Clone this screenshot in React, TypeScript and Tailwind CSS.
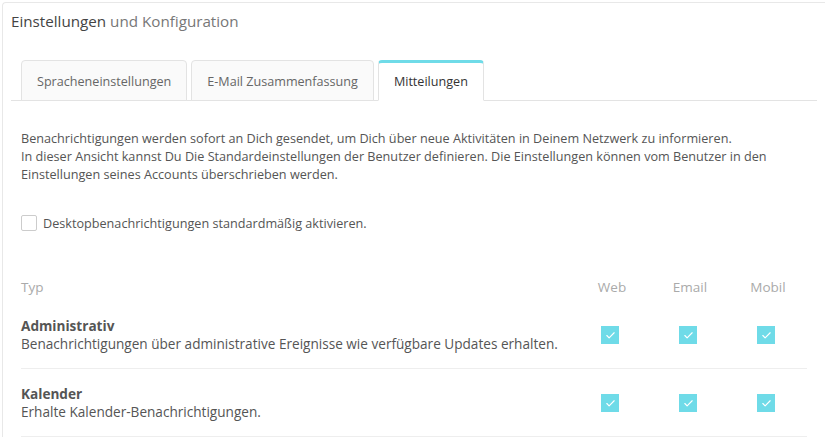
import { Check } from 'lucide-react';

const ROWS = [
  { title: 'Administrativ', desc: 'Benachrichtigungen über administrative Ereignisse wie verfügbare Updates erhalten.' },
  { title: 'Kalender', desc: 'Erhalte Kalender-Benachrichtigungen.' },
];

const TABS = ['Spracheneinstellungen', 'E-Mail Zusammenfassung', 'Mitteilungen'];

const TickBox = () => (
  <span className="flex h-[18px] w-[18px] items-center justify-center bg-[#6fdbe8]">
    <Check className="h-[11px] w-[11px] text-white" strokeWidth={2.5} />
  </span>
);

export default function App() {
  return (
    <div
      className="h-[437px] w-[825px] overflow-hidden bg-white pl-[2px] pt-[2px] text-[#555]"
      style={{ fontFamily: '"Open Sans", "Liberation Sans", sans-serif' }}
    >
      <div className="h-full rounded-tl-[4px] border-l border-t border-[#e8e8e8] pl-[8px] pr-[8px] pt-[7px]">
        <h1 className="text-[15.2px] leading-[22px] text-[#777]">
          <span className="text-[#444]">Einstellungen</span> und Konfiguration
        </h1>

        {/* tabs */}
        <div className="mt-[28px] flex gap-[4px] border-b border-[#e3e3e3] pl-[10px]">
          {TABS.map((tab, i) => {
            const active = i === TABS.length - 1;
            return (
              <div
                key={tab}
                className={
                  active
                    ? '-mb-px h-[41px] rounded-t-[4px] border border-t-[3px] border-[#e3e3e3] border-t-[#6fdbe8] border-b-white bg-white px-[15px] pt-[10px] text-[12.6px] leading-[18px] text-[#333]'
                    : '-mb-px h-[41px] rounded-t-[4px] border border-[#e3e3e3] bg-[#fafafa] px-[15px] pt-[12px] text-[12.6px] leading-[18px] text-[#666]'
                }
              >
                {tab}
              </div>
            );
          })}
        </div>

        <div className="px-[10px] pt-[28px] text-[12.65px] leading-[18px]">
          <p>
            Benachrichtigungen werden sofort an Dich gesendet, um Dich über neue Aktivitäten in Deinem Netzwerk zu informieren.
            <br />
            In dieser Ansicht kannst Du Die Standardeinstellungen der Benutzer definieren. Die Einstellungen können vom Benutzer in den
            Einstellungen seines Accounts überschrieben werden.
          </p>

          <label className="mt-[31px] flex items-center gap-[6px]">
            <span className="h-[16px] w-[16px] rounded-[2px] border border-[#ccc] bg-white" />
            <span>Desktopbenachrichtigungen standardmäßig aktivieren.</span>
          </label>

          {/* table */}
          <div className="mt-[45px]">
            <div className="flex pb-[4px] text-[13.5px] leading-[20px] text-[#aaa]">
              <div className="flex-1">Typ</div>
              <div className="w-[78px] text-center">Web</div>
              <div className="w-[78px] text-center">Email</div>
              <div className="w-[78px] text-center">Mobil</div>
            </div>
            {ROWS.map((row) => (
              <div key={row.title} className="flex items-center border-b border-[#eee] pb-[15px] pt-[16px] text-[13.6px]">
                <div className="flex-1">
                  <div className="font-bold">{row.title}</div>
                  <div>{row.desc}</div>
                </div>
                <div className="flex w-[78px] justify-center pr-[4px]"><TickBox /></div>
                <div className="flex w-[78px] justify-center pr-[4px]"><TickBox /></div>
                <div className="flex w-[78px] justify-center pr-[4px]"><TickBox /></div>
              </div>
            ))}
          </div>
        </div>
      </div>
    </div>
  );
}
